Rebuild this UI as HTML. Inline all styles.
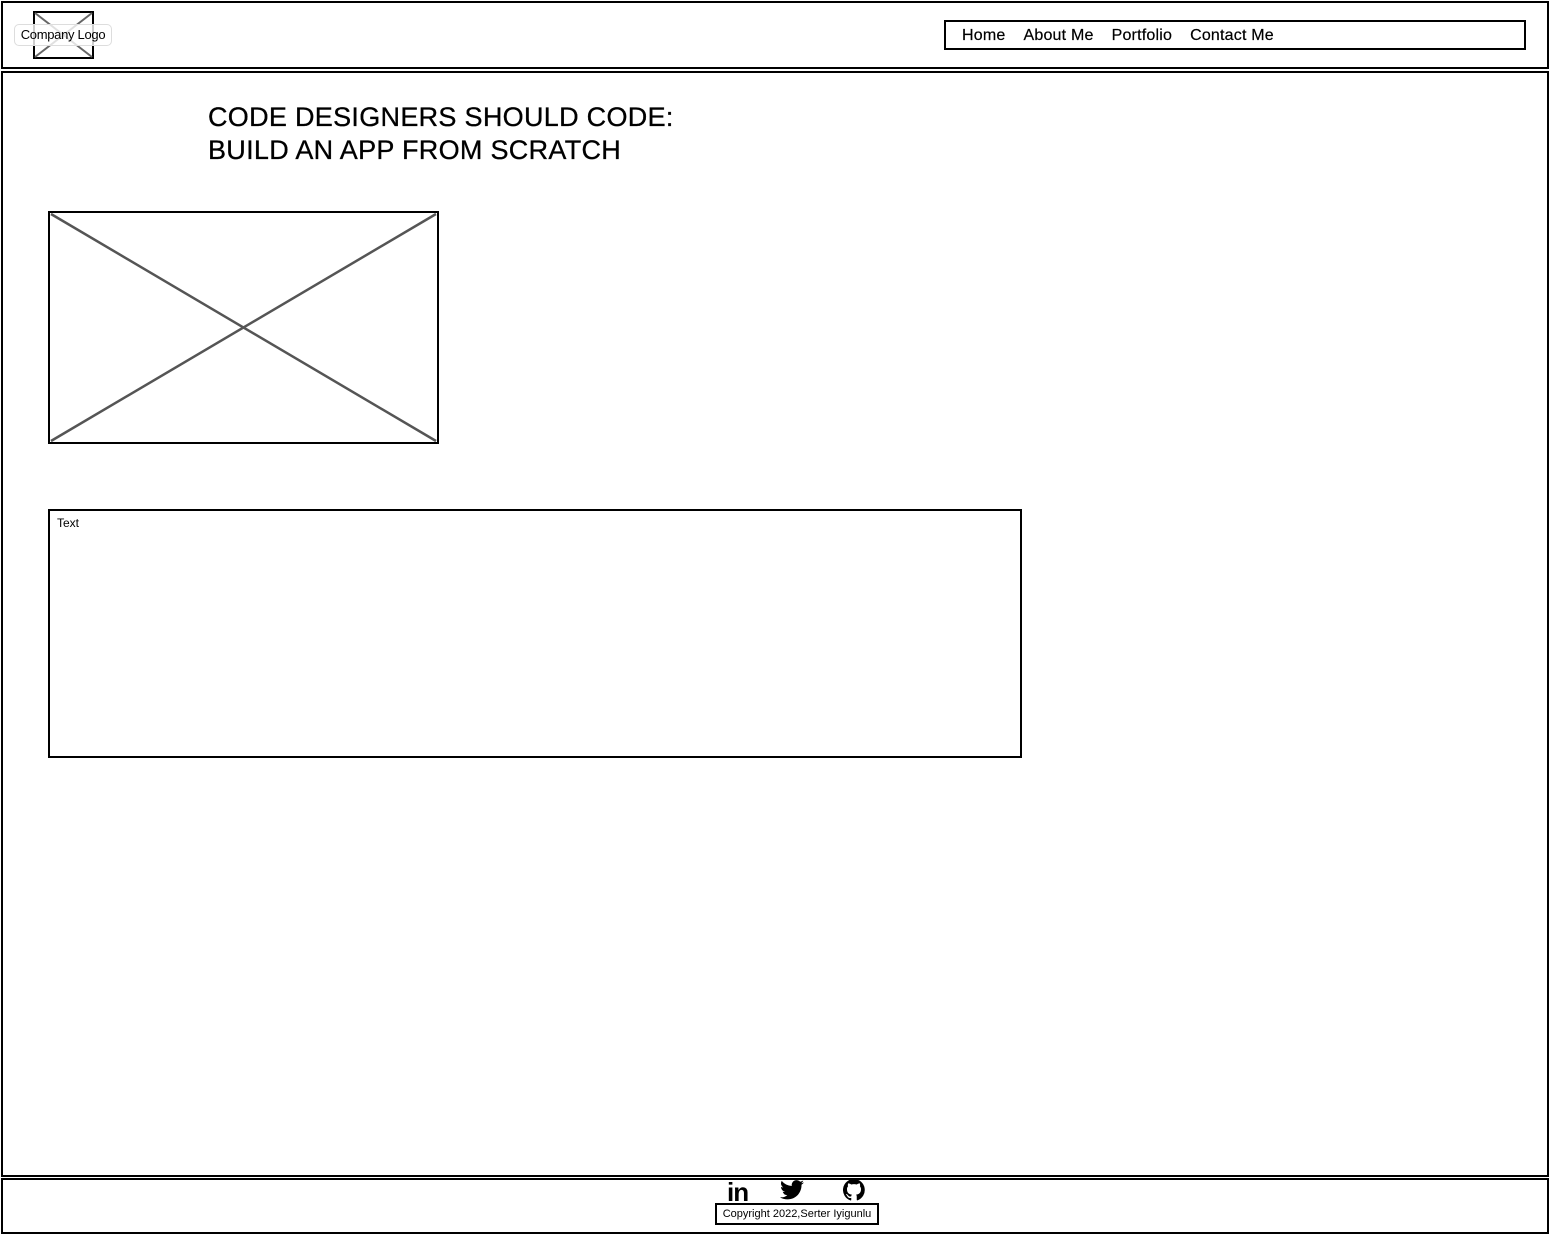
<!DOCTYPE html>
<html><head><style>
body{margin:0;width:1550px;height:1236px;background:#fff;position:relative;font-family:"Liberation Sans",sans-serif;overflow:hidden}
.a{position:absolute;box-sizing:border-box}
</style></head><body>
<div class="a" style="left:1px;top:1px;width:1548px;height:68px;border:2px solid #000"></div>
<div class="a" style="left:1px;top:71px;width:1548px;height:1106px;border:2px solid #000"></div>
<div class="a" style="left:1px;top:1178px;width:1548px;height:56px;border:2px solid #000"></div>
<svg class="a" style="left:33px;top:11px" width="61" height="48"><rect x="1" y="1" width="59" height="46" fill="#fff" stroke="#000" stroke-width="2"/><path d="M2 2L59 46M59 2L2 46" stroke="#666" stroke-width="2"/></svg>
<div class="a" style="left:14px;top:24px;width:98px;height:22px;border:1px solid #ddd;border-radius:5px;background:rgba(255,255,255,.8);font-size:13px;line-height:20px;text-align:center;letter-spacing:-0.3px">Company Logo</div>
<div class="a" style="left:944px;top:20px;width:582px;height:30px;border:2px solid #000;font-size:16px;line-height:28px;padding-left:16px;letter-spacing:0.2px;-webkit-text-stroke:0.2px #000"><span style="margin-right:18px">Home</span><span style="margin-right:18px">About Me</span><span style="margin-right:18px">Portfolio</span><span>Contact Me</span></div>
<div class="a" style="left:208px;top:101px;font-size:27px;line-height:33px;letter-spacing:0.3px;-webkit-text-stroke:0.3px #000">CODE DESIGNERS SHOULD CODE:<br>BUILD AN APP FROM SCRATCH</div>
<svg class="a" style="left:48px;top:211px" width="391" height="233"><rect x="1" y="1" width="389" height="231" fill="#fff" stroke="#000" stroke-width="2"/><path d="M3 3L388 230M388 3L3 230" stroke="#555" stroke-width="2.5"/></svg>
<div class="a" style="left:48px;top:509px;width:974px;height:249px;border:2px solid #000;font-size:12px;padding:5px 7px">Text</div>
<div class="a" style="left:727px;top:1179px;font-size:26px;font-weight:bold;line-height:26px;letter-spacing:-1px">in</div>
<svg class="a" style="left:780px;top:1180px" width="24" height="20" viewBox="0 0 24 20"><path d="M24 2.4a10 10 0 0 1-2.8.8 5 5 0 0 0 2.1-2.7 10 10 0 0 1-3.1 1.2A4.9 4.9 0 0 0 11.8 6 14 14 0 0 1 1.7.9a4.9 4.9 0 0 0 1.5 6.6A4.9 4.9 0 0 1 1 6.9a4.9 4.9 0 0 0 3.9 4.8 5 5 0 0 1-2.2.1 4.9 4.9 0 0 0 4.600 3.4A9.9 9.9 0 0 1 0 17.2 14 14 0 0 0 7.5 19.4c9.1 0 14-7.5 14-14v-.6A10 10 0 0 0 24 2.4z"/></svg>
<svg class="a" style="left:843px;top:1179px" width="22" height="22" viewBox="0 0 16 16"><path d="M8 0a8 8 0 0 0-2.5 15.6c.4 0 .5-.2.5-.4v-1.5c-2.2.5-2.700-1-2.7-1-.4-.9-.9-1.2-.9-1.2-.7-.5.1-.5.1-.5.8.1 1.2.8 1.2.8.7 1.3 1.900.9 2.3.7.1-.5.3-.9.5-1.1-1.8-.2-3.6-.9-3.6-4 0-.9.3-1.6.8-2.1-.1-.2-.4-1 .1-2.1 0 0 .7-.2 2.2.8a7.500 7.500 0 0 1 4 0c1.5-1 2.2-.8 2.2-.8.4 1.1.2 1.9.1 2.1.5.6.8 1.3.8 2.1 0 3.1-1.9 3.8-3.6 4 .3.3.5.8.5 1.5v2.2c0 .2.1.5.6.4A8 8 0 0 0 8 0z"/></svg>
<div class="a" style="left:715px;top:1203px;width:164px;height:22px;border:2px solid #000;font-size:11px;line-height:18px;text-align:center">Copyright 2022,Serter Iyigunlu</div>
</body></html>
